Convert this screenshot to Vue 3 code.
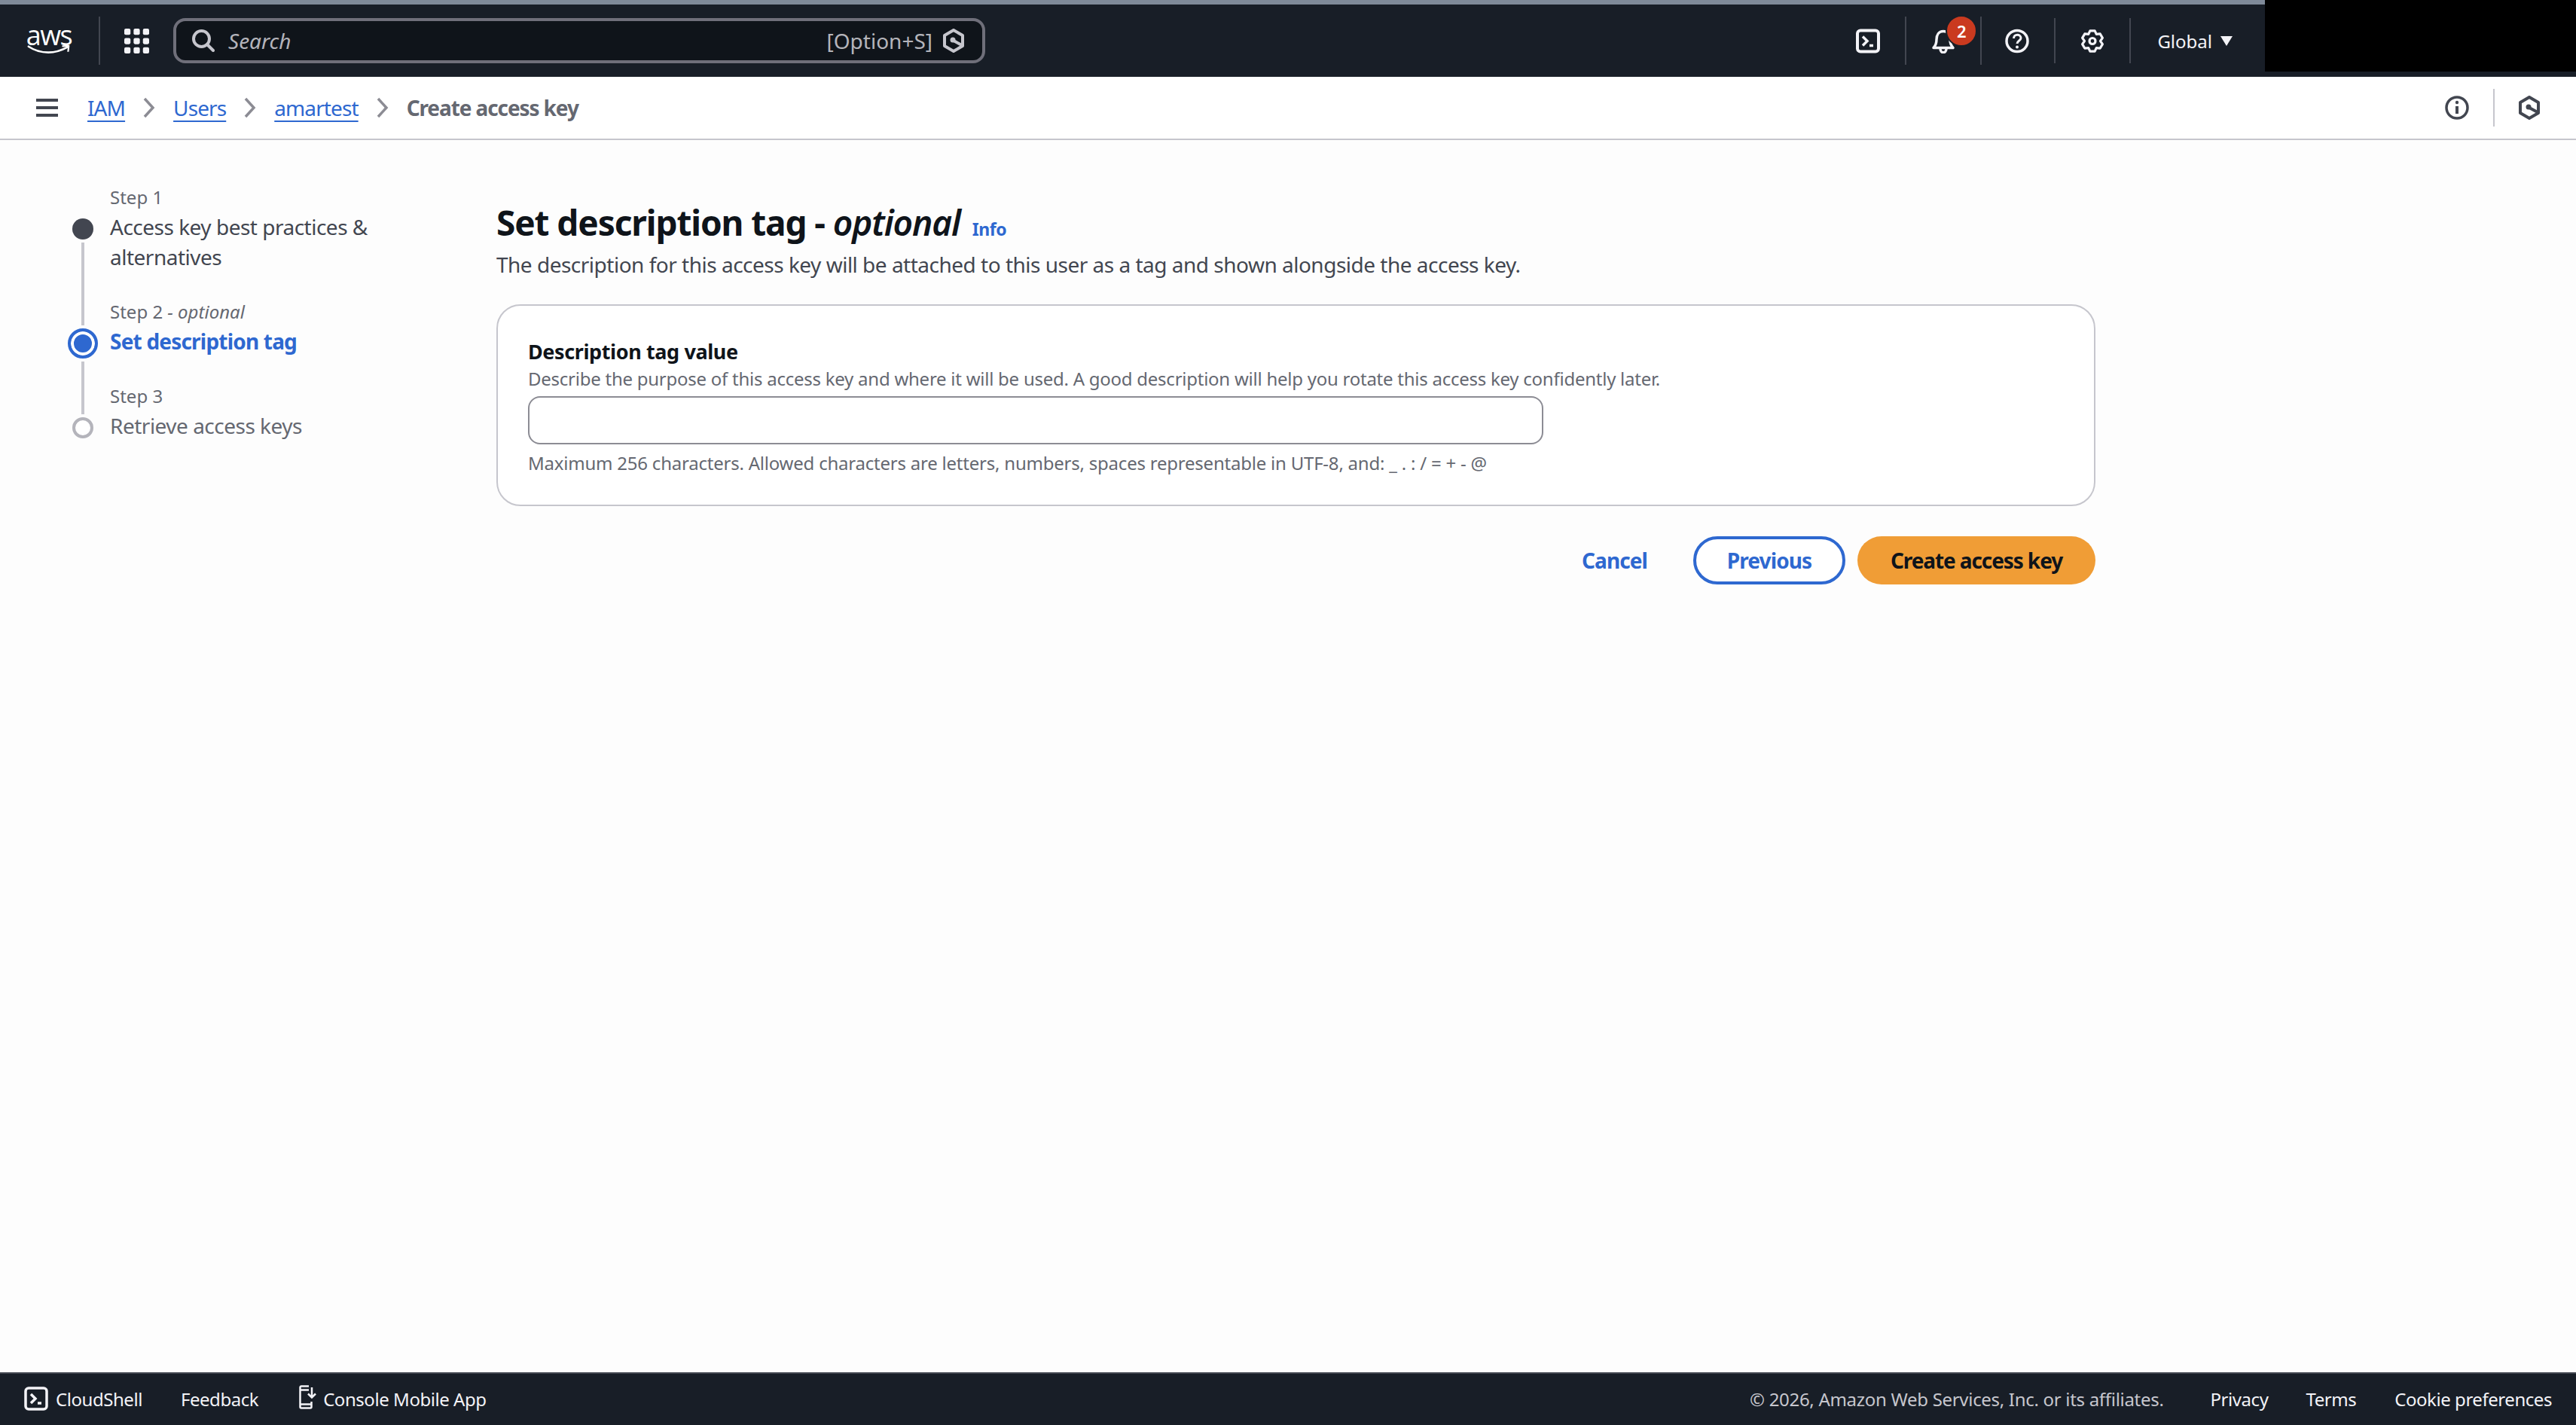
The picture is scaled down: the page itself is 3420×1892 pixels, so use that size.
<script setup>
const steps = [
  { label: 'Step 1', title: ['Access key best practices &', 'alternatives'], state: 'done' },
  { label: 'Step 2', optional: true, title: ['Set description tag'], state: 'active' },
  { label: 'Step 3', title: ['Retrieve access keys'], state: 'todo' }
]
const crumbs = ['IAM', 'Users', 'amartest']
</script>

<template>
  <div class="page">
    <div class="top-strip"></div>
    <header class="topbar">
      <div class="logo">
        <span class="logo-text">aws</span>
        <svg class="smile" viewBox="0 0 64 16" fill="none">
          <path d="M1 2c9 6 19 9 30 9 10 0 20-3 29-8" stroke="#fff" stroke-width="3" stroke-linecap="round" />
          <path d="M52 1.500l10-.5-1 9" stroke="#fff" stroke-width="2.500" stroke-linejoin="round" />
        </svg>
      </div>
      <i class="sep first"></i>
      <svg class="grid-icon" viewBox="0 0 32 32" fill="#f3f3f7">
        <rect x="0" y="0" width="8" height="8" rx="2" /><rect x="12" y="0" width="8" height="8" rx="2" /><rect x="24" y="0" width="8" height="8" rx="2" />
        <rect x="0" y="12" width="8" height="8" rx="2" /><rect x="12" y="12" width="8" height="8" rx="2" /><rect x="24" y="12" width="8" height="8" rx="2" />
        <rect x="0" y="24" width="8" height="8" rx="2" /><rect x="12" y="24" width="8" height="8" rx="2" /><rect x="24" y="24" width="8" height="8" rx="2" />
      </svg>
      <div class="search">
        <svg class="search-icon" viewBox="0 0 30 30" fill="none" stroke="#c6c6cd" stroke-width="4">
          <circle cx="12.500" cy="12.500" r="10.500" />
          <path d="M20 20l8 8" stroke-linecap="round" />
        </svg>
        <span class="search-text">Search</span>
        <span class="shortcut">[Option+S]</span>
        <svg class="hex-icon" viewBox="0 0 30 32" fill="none" stroke="#c6c6cd" stroke-width="4">
          <path d="M15 2l12 7v14l-12 7-12-7V9z" stroke-linejoin="round" />
          <circle cx="14" cy="15" r="3.500" fill="#c6c6cd" stroke="none" />
          <path d="M15 16l11 6" />
        </svg>
      </div>
      <div class="top-actions">
        <svg class="top-icon" viewBox="0 0 32 32" fill="none" stroke="#f3f3f7" stroke-width="4">
          <rect x="2" y="2" width="28" height="28" rx="4" />
          <path d="M9 10l6 6-6 6" stroke-width="3.500" />
          <path d="M18 22h5" stroke-width="3.500" />
        </svg>
        <i class="sep"></i>
        <div class="bell">
          <svg class="top-icon" viewBox="0 0 32 32" fill="none" stroke="#f3f3f7" stroke-width="3.500">
            <path d="M3 25c3-3 4-6 4-11C7 8 10 3 16 3s9 5 9 11c0 5 1 8 4 11z" stroke-linejoin="round" />
            <path d="M12 26c0 7 8 7 8 0" />
          </svg>
          <span class="badge">2</span>
        </div>
        <i class="sep"></i>
        <svg class="top-icon help" viewBox="0 0 32 32" fill="none" stroke="#f3f3f7" stroke-width="3.500">
          <circle cx="16" cy="16" r="14" />
          <path d="M11.500 12.500c0-6.500 9.500-6 9.500-.5 0 3.500-5 3.500-5 7.500" stroke-width="3" />
          <circle cx="16" cy="24" r="2" fill="#f3f3f7" stroke="none" />
        </svg>
        <i class="sep short"></i>
        <svg class="top-icon" viewBox="0 0 32 32" fill="none" stroke="#f3f3f7" stroke-width="3.200" stroke-linejoin="round">
          <path d="M12.850 2.360H19.150L21.250 6.910 26.240 6.450 29.390 11.910 26.500 16 29.390 20.090 26.240 25.550 21.250 25.090 19.150 29.640H12.850L10.750 25.090 5.760 25.550 2.610 20.090 5.500 16 2.610 11.910 5.760 6.450 10.750 6.910Z" />
          <circle cx="16" cy="16" r="4" />
        </svg>
        <i class="sep short"></i>
        <span class="region">Global</span>
        <span class="caret"></span>
      </div>
    </header>

    <nav class="crumbbar">
      <svg class="menu-icon" viewBox="0 0 29 24" fill="#424650">
        <rect width="29" height="4" /><rect y="10" width="29" height="4" /><rect y="20" width="29" height="4" />
      </svg>
      <template v-for="crumb in crumbs" :key="crumb">
        <a class="crumb-link">{{ crumb }}</a>
        <svg class="chevron" viewBox="0 0 16 28" fill="none" stroke="#8c8c94" stroke-width="3.500">
          <path d="M2 2l11 12L2 26" />
        </svg>
      </template>
      <span class="crumb-current">Create access key</span>
      <div class="crumb-tools">
        <svg class="tool-icon" viewBox="0 0 32 32" fill="none" stroke="#424650" stroke-width="3.500">
          <circle cx="16" cy="16" r="14" />
          <path d="M16 14v10" stroke-width="4" />
          <circle cx="16" cy="9" r="2.200" fill="#424650" stroke="none" />
        </svg>
        <i class="tool-sep"></i>
        <svg class="tool-icon" viewBox="0 0 30 32" fill="none" stroke="#424650" stroke-width="4">
          <path d="M15 2l12 7v14l-12 7-12-7V9z" stroke-linejoin="round" />
          <circle cx="14" cy="15" r="3.500" fill="#424650" stroke="none" />
          <path d="M15 16l11 6" />
        </svg>
      </div>
    </nav>

    <main class="content">
      <ol class="stepper">
        <li v-for="step in steps" :key="step.label" class="step" :class="step.state">
          <div class="step-label">
            {{ step.label }}<em v-if="step.optional"> - optional</em>
          </div>
          <div class="step-title">
            <span v-for="line in step.title" :key="line" class="step-line">{{ line }}</span>
          </div>
          <span class="dot"></span>
        </li>
      </ol>

      <section class="form">
        <h1 class="form-title">Set description tag - <em>optional</em> <a class="info">Info</a></h1>
        <p class="form-desc">The description for this access key will be attached to this user as a tag and shown alongside the access key.</p>
        <div class="card">
          <label class="field-label">Description tag value</label>
          <p class="field-desc">Describe the purpose of this access key and where it will be used. A good description will help you rotate this access key confidently later.</p>
          <input class="field-input" type="text" />
          <p class="field-hint">Maximum 256 characters. Allowed characters are letters, numbers, spaces representable in UTF-8, and: _ . : / = + - @</p>
        </div>
        <div class="actions">
          <button class="btn-link" type="button">Cancel</button>
          <button class="btn-normal" type="button">Previous</button>
          <button class="btn-primary" type="button">Create access key</button>
        </div>
      </section>
    </main>

    <footer class="footer">
      <svg class="foot-shell" viewBox="0 0 32 32" fill="none" stroke="#f3f3f7" stroke-width="3.500">
        <rect x="2" y="2" width="28" height="28" rx="4" />
        <path d="M9 10l6 6-6 6" />
        <path d="M18 22h5" />
      </svg>
      <span class="foot-item shell">CloudShell</span>
      <span class="foot-item feedback">Feedback</span>
      <svg class="foot-phone" viewBox="0 0 24 32" fill="none" stroke="#f3f3f7" stroke-width="2.500">
        <path d="M13 1.500H3A1.500 1.500 0 0 0 1.500 3v26A1.500 1.500 0 0 0 3 30.500h12a1.500 1.500 0 0 0 1.500-1.500v-7" />
        <path d="M2 6.500h11M2 25.500h14" />
        <path d="M17 3v13M12 11.500l5 5 5-5" />
      </svg>
      <span class="foot-item">Console Mobile App</span>
      <span class="copyright">© 2026, Amazon Web Services, Inc. or its affiliates.</span>
      <span class="foot-item privacy">Privacy</span>
      <span class="foot-item terms">Terms</span>
      <span class="foot-item">Cookie preferences</span>
    </footer>

    <div class="redact"></div>
  </div>
</template>

<style>
html, body { margin: 0; background: #fdfdfd; }
</style>

<style scoped>
.page {
  position: relative;
  display: flex;
  flex-direction: column;
  height: 1892px;
  overflow: hidden;
  background: #fdfdfd;
  font-family: "Noto Sans", "Open Sans", sans-serif;
  color: #0f141a;
}

.top-strip { height: 6px; background: #7f8a99; flex: none; }

.topbar {
  flex: none;
  height: 96px;
  display: flex;
  align-items: center;
  background: #181e27;
  padding-left: 34px;
}
.logo { width: 62px; height: 40px; display: flex; flex-direction: column; align-items: center; }
.logo-text { color: #fff; font-size: 36px; line-height: 26px; font-weight: 400; letter-spacing: -1.500px; font-family: "Open Sans", sans-serif; }
.smile { width: 64px; height: 16px; margin-top: 0; }
.sep { width: 2px; height: 64px; background: #424650; flex: none; }
.sep.first { margin-left: 35px; margin-right: 32px; }
.sep.short { height: 60px; }
.grid-icon { width: 33px; height: 33px; flex: none; }

.search {
  margin-left: 32px;
  width: 1078px;
  height: 60px;
  box-sizing: border-box;
  border: 4px solid #6f6f7a;
  border-radius: 16px;
  background: #0f141a;
  display: flex;
  align-items: center;
  padding: 0 23px 0 21px;
}
.search-icon { width: 30px; height: 30px; flex: none; }
.search-text { margin-left: 18px; font-style: italic; font-size: 28px; color: #b4b4bb; flex: 1; }
.shortcut { font-size: 28px; color: #b4b4bb; }
.hex-icon { width: 30px; height: 32px; margin-left: 13px; flex: none; }

.top-actions { margin-left: auto; display: flex; align-items: center; padding-right: 456px; }
.top-icon { width: 32px; height: 33px; flex: none; display: block; margin: 0 33px; }
.top-icon.help { margin-left: 31px; }
.bell { position: relative; }
.badge {
  position: absolute;
  left: 52px;
  top: -18px;
  width: 38px;
  height: 38px;
  border-radius: 50%;
  border: 2px solid #181e27;
  background: #ca3a1f;
  color: #fff;
  font-size: 22px;
  font-weight: 600;
  line-height: 38px;
  text-align: center;
}
.region { margin-left: 35px; color: #f3f3f7; font-size: 24px; }
.caret {
  margin-left: 11px;
  width: 0;
  height: 0;
  border-left: 8px solid transparent;
  border-right: 8px solid transparent;
  border-top: 13px solid #f3f3f7;
}

.crumbbar {
  flex: none;
  height: 82px;
  border-bottom: 2px solid #c6c6cd;
  background: #fff;
  display: flex;
  align-items: center;
  padding: 0 46px 0 48px;
}
.menu-icon { width: 29px; height: 24px; flex: none; margin-right: 39px; }
.crumb-link { color: #2e68d0; font-size: 28px; letter-spacing: -.9px; text-decoration: underline; text-underline-offset: 6px; text-decoration-thickness: 2px; }
.chevron { width: 16px; height: 28px; margin: 0 24px; flex: none; }
.crumb-current { color: #656871; font-size: 28px; font-weight: 700; letter-spacing: -1.100px; }
.crumb-tools { margin-left: auto; display: flex; align-items: center; }
.tool-icon { width: 32px; height: 32px; flex: none; }
.tool-sep { width: 2px; height: 50px; background: #c6c6cd; margin: 0 30px 0 32px; }

.content { flex: 1; display: flex; padding-top: 57px; }

.stepper {
  list-style: none;
  margin: 0;
  padding: 0 0 0 146px;
  width: 659px;
  box-sizing: border-box;
  flex: none;
}
.step { position: relative; padding-bottom: 34px; }
.step:last-child { padding-bottom: 0; }
.step-label { font-size: 24px; line-height: 38px; color: #656871; }
.step-line { display: block; font-size: 28px; line-height: 40px; letter-spacing: -.5px; color: #424650; }
.step.active .step-line { color: #2e68d0; font-weight: 700; letter-spacing: -.8px; }
.step.todo .step-line { color: #656871; }
.dot {
  position: absolute;
  left: -50px;
  top: 47px;
  width: 28px;
  height: 28px;
  box-sizing: border-box;
  border-radius: 50%;
  background: #424650;
}
.step.done::after, .step.active::after {
  content: "";
  position: absolute;
  left: -38px;
  width: 4px;
  background: #c6c6cd;
}
.step.done::after { top: 79px; height: 110px; }
.step.active::after { top: 85px; height: 70px; }
.step.active .dot {
  left: -56px;
  top: 41px;
  width: 40px;
  height: 40px;
  background: #2e68d0;
  border: 4px solid #2e68d0;
  box-shadow: inset 0 0 0 4px #fff;
}
.step.todo .dot { background: #fff; border: 4px solid #b4b4bb; }

.form { width: 2123px; padding-top: 22px; }
.form-title { margin: 0; font-size: 46px; line-height: 60px; font-weight: 700; letter-spacing: -1.100px; }
.form-title em { font-weight: 600; }
.info { margin-left: 5px; font-size: 23px; line-height: 20px; font-weight: 700; letter-spacing: -.5px; color: #2e68d0; }
.form-desc { margin: 6px 0 0; font-size: 28px; line-height: 40px; letter-spacing: -.5px; color: #424650; }
.card {
  margin-top: 33px;
  height: 268px;
  box-sizing: border-box;
  border: 2px solid #c6c6cd;
  border-radius: 32px;
  background: #fff;
  padding: 41px 40px 0;
}
.field-label { display: block; font-size: 27px; line-height: 40px; font-weight: 700; letter-spacing: -.4px; color: #0f141a; }
.field-desc { margin: 0; font-size: 24px; line-height: 32px; letter-spacing: -.25px; color: #656871; }
.field-input {
  display: block;
  margin-top: 7px;
  width: 1348px;
  height: 64px;
  box-sizing: border-box;
  border: 2px solid #8c8c94;
  border-radius: 16px;
  background: #fff;
  outline: none;
}
.field-hint { margin: 9px 0 0; font-size: 24px; line-height: 32px; letter-spacing: -.22px; color: #656871; }

.actions { margin-top: 40px; display: flex; justify-content: flex-end; align-items: center; }
.actions button { font-family: inherit; font-size: 28px; font-weight: 700; letter-spacing: -.9px; height: 64px; border-radius: 32px; cursor: pointer; padding: 0; }
.actions .btn-link { border: none; background: none; color: #2e68d0; margin-right: 61px; }
.actions .btn-normal { width: 202px; box-sizing: border-box; border: 4px solid #2e68d0; background: #fff; color: #2e68d0; margin-right: 16px; }
.actions .btn-primary { width: 316px; border: none; background: #f09d36; color: #0f141a; letter-spacing: -1.100px; }

.footer {
  flex: none;
  height: 70px;
  box-sizing: border-box;
  border-top: 2px solid #424650;
  background: #181e27;
  display: flex;
  align-items: center;
  padding: 0 32px 2px;
}
.foot-shell { width: 32px; height: 32px; flex: none; margin-right: 10px; }
.foot-phone { width: 24px; height: 32px; flex: none; margin: -4px 8px 0 54px; }
.foot-item { color: #f3f3f7; font-size: 24px; letter-spacing: -.45px; }
.feedback { margin-left: 51px; }
.copyright { margin-left: auto; color: #c6c6cd; font-size: 24px; letter-spacing: -.3px; }
.privacy { margin-left: 62px; }
.terms { margin: 0 51px 0 50px; }

.redact { position: absolute; left: 3007px; top: 0; width: 413px; height: 95px; background: #000; }
</style>
